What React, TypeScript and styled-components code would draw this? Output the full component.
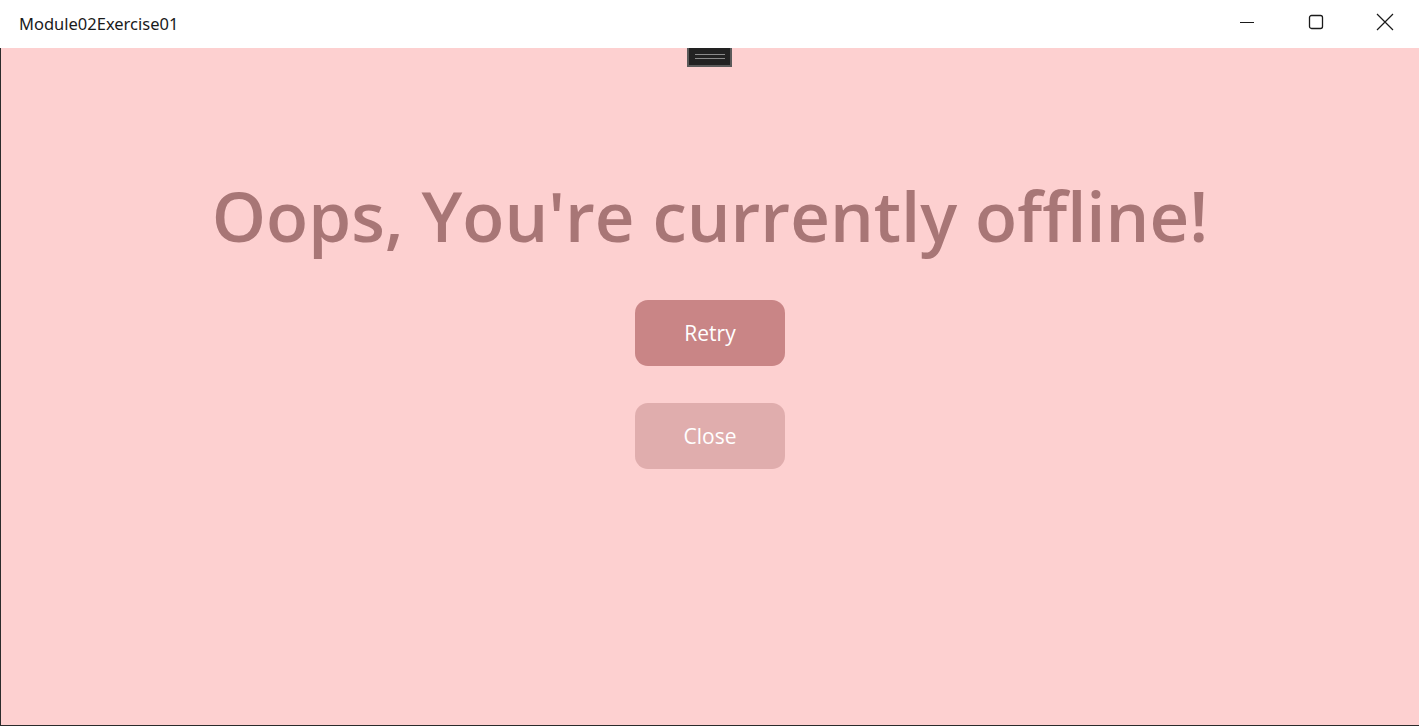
import styled, { createGlobalStyle } from "styled-components";

const GlobalStyle = createGlobalStyle`
  html, body {
    margin: 0;
    padding: 0;
    overflow: hidden;
  }
  body {
    font-family: "Open Sans", "Noto Sans", sans-serif;
  }
`;

export default function App() {
  return (
    <>
      <GlobalStyle />
      <Window>
        <TitleBar>
          <Title>Module02Exercise01</Title>
          <Controls>
            <ControlButton aria-label="Minimize">
              <svg width="16" height="16" viewBox="0 0 16 16">
                <line x1="1" y1="8.5" x2="15" y2="8.5" stroke="#1a1a1a" strokeWidth="1" />
              </svg>
            </ControlButton>
            <ControlButton aria-label="Maximize">
              <svg width="16" height="16" viewBox="0 0 16 16">
                <rect x="1.5" y="1.5" width="13" height="13" rx="2" fill="none" stroke="#1a1a1a" strokeWidth="1.3" />
              </svg>
            </ControlButton>
            <ControlButton aria-label="Close">
              <svg width="18" height="18" viewBox="0 0 18 18">
                <path d="M1 1 L17 17 M17 1 L1 17" stroke="#1a1a1a" strokeWidth="1.2" />
              </svg>
            </ControlButton>
          </Controls>
        </TitleBar>
        <Content>
          <DebugBar>
            <DebugGrip />
          </DebugBar>
          <Heading>Oops, You're currently offline!</Heading>
          <ActionButton $variant="primary">Retry</ActionButton>
          <ActionButton $variant="secondary">Close</ActionButton>
        </Content>
      </Window>
    </>
  );
}

const Window = styled.div`
  width: 1419px;
  height: 726px;
  display: flex;
  flex-direction: column;
  background: #fdd0d0;
`;

const TitleBar = styled.div`
  height: 48px;
  flex: none;
  background: #ffffff;
  display: flex;
  align-items: center;
  justify-content: space-between;
  padding-left: 19px;
`;

const Title = styled.span`
  font-family: "Noto Sans", "Open Sans", sans-serif;
  font-size: 16.5px;
  color: #1a1a1a;
  margin-top: -2px;
`;

const Controls = styled.div`
  display: flex;
  height: 100%;
`;

const ControlButton = styled.div`
  width: 69px;
  height: 100%;
  display: flex;
  align-items: center;
  justify-content: center;
  margin-top: -2px;
`;

const Content = styled.div`
  flex: 1;
  position: relative;
  display: flex;
  flex-direction: column;
  align-items: center;
  border-left: 1px solid #2b2b2b;
  border-bottom: 1px solid #2b2b2b;
`;

const DebugBar = styled.div`
  position: absolute;
  top: 0;
  left: 686px;
  width: 41px;
  height: 17px;
  background: #222222;
  border: 2px solid #5a5a5a;
  border-top: none;
  display: flex;
  align-items: center;
  justify-content: center;
`;

const DebugGrip = styled.div`
  width: 30px;
  height: 3px;
  border-top: 1px solid #8a8a8a;
  border-bottom: 1px solid #8a8a8a;
`;

const Heading = styled.h1`
  margin: 119px 0 0 0;
  font-family: "Open Sans", "Noto Sans", sans-serif;
  font-weight: 600;
  font-size: 69px;
  line-height: 96px;
  color: #a87676;
`;

const ActionButton = styled.div<{ $variant: "primary" | "secondary" }>`
  width: 150px;
  height: 66px;
  border-radius: 13px;
  display: flex;
  align-items: center;
  justify-content: center;
  font-size: 21px;
  color: #ffffff;
  background: ${(p) => (p.$variant === "primary" ? "#c98586" : "#e0adad")};
  margin-top: ${(p) => (p.$variant === "primary" ? "37px" : "37px")};
`;
